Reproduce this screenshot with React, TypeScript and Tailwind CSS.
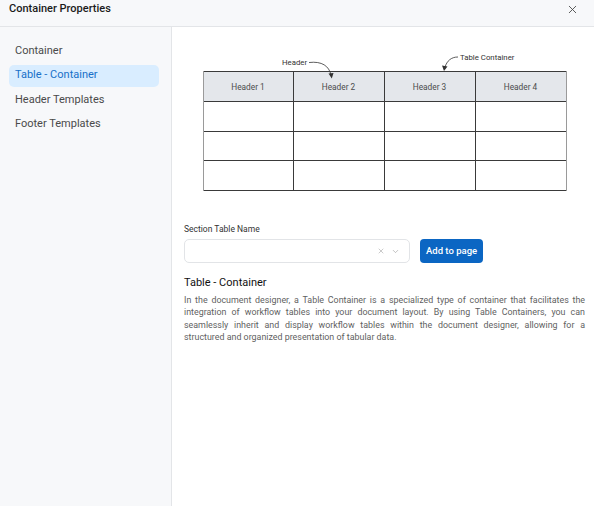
import React from "react";
import { X, ChevronDown } from "lucide-react";

const menu = ["Container", "Table - Container", "Header Templates", "Footer Templates"];

function TableDiagram() {
  const cols = [19, 109, 200, 291, 382];
  const rows = [31, 61, 91, 120, 150];
  return (
    <svg width="401" height="160" viewBox="0 0 401 160" className="block">
      <rect x={cols[0]} y={rows[0]} width={cols[4] - cols[0]} height={rows[1] - rows[0]} fill="#e4e7eb" />
      {rows.map((y, i) => (
        <line key={"r" + i} x1={cols[0]} x2={cols[4]} y1={y + 0.5} y2={y + 0.5} stroke="#3a3a3a" strokeWidth="1" />
      ))}
      {cols.map((x, i) => (
        <line
          key={"c" + i}
          x1={x + 0.5}
          x2={x + 0.5}
          y1={rows[0]}
          y2={rows[4] + 1}
          stroke={i === 0 || i === 4 ? "#9a9a9a" : "#3a3a3a"}
          strokeWidth="1"
        />
      ))}
      {["Header 1", "Header 2", "Header 3", "Header 4"].map((t, i) => (
        <text
          key={t}
          x={(cols[i] + cols[i + 1]) / 2}
          y={49.5}
          textAnchor="middle"
          fontSize="8.3"
          fill="#4b4b4b"
          fontFamily="Roboto, sans-serif"
        >
          {t}
        </text>
      ))}
      {/* Header label */}
      <text x="98" y="25" fontSize="7.8" fill="#333" fontFamily="Roboto, sans-serif">
        Header
      </text>
      <path d="M125 22.5 C138 21 145 26 147 35" fill="none" stroke="#333" strokeWidth="0.8" />
      <path d="M144.5 33.5 L147.8 38.5 L149.5 33 Z" fill="#333" />
      {/* Table Container label */}
      <text x="276" y="19.5" fontSize="7.8" fill="#333" fontFamily="Roboto, sans-serif">
        Table Container
      </text>
      <path d="M274 17 C267 17 263 21 261 27" fill="none" stroke="#333" strokeWidth="0.8" />
      <path d="M258 25.5 L260 31 L263.5 26.5 Z" fill="#333" />
    </svg>
  );
}

export default function App() {
  const [active, setActive] = React.useState(1);

  return (
    <div className="w-[594px] h-[506px] flex flex-col bg-white font-['Roboto',sans-serif] overflow-hidden">
      <header className="h-[27px] shrink-0 flex items-center justify-between bg-[#f7f8fa] border-b border-[#e3e5e8] pl-[9px] pr-[15px]">
        <h1 className="text-[11px] font-medium text-[#1b1b1b] -mt-[10px] leading-none">Container Properties</h1>
        <X size={13} strokeWidth={1.6} className="text-[#444] -mt-[8px]" />
      </header>

      <div className="flex flex-1 min-h-0">
        <aside className="w-[172px] shrink-0 bg-[#f7f8fa] border-r border-[#e3e5e8] pt-[13px] px-[9px]">
          <ul className="flex flex-col gap-[2.5px]">
            {menu.map((item, index) => (
              <li key={item}>
                <button
                  onClick={() => setActive(index)}
                  className={`w-[150px] h-[22px] flex items-center text-left px-[6px] rounded-[5px] text-[11px] ${
                    active === index ? "bg-[#d9edff] text-[#1870c8]" : "text-[#4a4a4a]"
                  }`}
                >
                  {item}
                </button>
              </li>
            ))}
          </ul>
        </aside>

        <main className="flex-1 pt-[13px] pl-3 pr-[9px]">
          <TableDiagram />

          <div className="mt-[24px]">
            <label className="block text-[8.5px] leading-[11px] text-[#333]">Section Table Name</label>
            <div className="mt-[4px] flex items-center gap-[10px]">
              <div className="w-[226px] h-[24px] rounded-[5px] border border-[#e2e4e7] bg-white flex items-center justify-end gap-[6px] pr-[9px]">
                <X size={8} strokeWidth={1.6} className="text-[#9a9a9a]" />
                <ChevronDown size={9} strokeWidth={1.6} className="text-[#9a9a9a]" />
              </div>
              <button className="h-[24px] px-[6px] rounded-[4px] bg-[#0b66c3] text-white text-[9.5px] font-medium">
                Add to page
              </button>
            </div>
          </div>

          <h2 className="mt-[13px] text-[11px] leading-[14px] font-normal text-[#111]">Table - Container</h2>
          <p className="mt-[4px] text-[8.9px] leading-[12.4px] text-[#5f5f5f] text-justify">
            In the document designer, a Table Container is a specialized type of container that facilitates the
            integration of workflow tables into your document layout. By using Table Containers, you can seamlessly
            inherit and display workflow tables within the document designer, allowing for a structured and organized
            presentation of tabular data.
          </p>
        </main>
      </div>
    </div>
  );
}
